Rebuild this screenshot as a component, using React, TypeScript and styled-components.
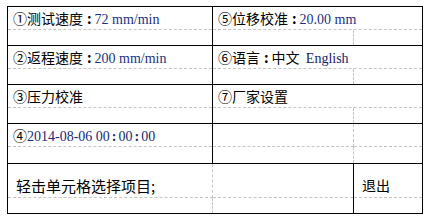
import React from 'react';
import styled, { createGlobalStyle } from 'styled-components';

const GlobalStyle = createGlobalStyle`
  html, body {
    margin: 0;
    background: #fff;
  }
  * { box-sizing: border-box; }
`;

const DASH = '1px dashed #c4c4c4';

const Page = styled.div`
  padding: 6px 0 0 7px;
  font-family: "Noto Sans CJK SC", "Liberation Serif", serif;
  font-size: 14px;
  color: #000;
`;

const Table = styled.div`
  display: grid;
  grid-template-columns: 204px 209px;
  grid-template-rows: 38px 38px 38px 39px 49px;
  gap: 1px;
  width: fit-content;
  background: #000;
  border: 1px solid #000;
`;

const Cell = styled.div<{ $split?: boolean }>`
  display: grid;
  grid-template-columns: ${(p) => (p.$split ? '141px 1fr' : '1fr')};
  grid-template-rows: 23px 1fr;
  background: #fff;
`;

const Label = styled.div`
  grid-column: 1 / -1;
  padding: 1px 0 0 5px;
  border-bottom: ${DASH};
  white-space: nowrap;
  line-height: 21px;
`;

const Part = styled.div<{ $right?: boolean; $bottom?: boolean }>`
  border-right: ${(p) => (p.$right ? DASH : 'none')};
  border-bottom: ${(p) => (p.$bottom ? DASH : 'none')};
`;

const Colon = styled.span<{ $gap?: number }>`
  margin: 0 ${(p) => p.$gap ?? 3}px 0 ${(p) => p.$gap ?? 4}px;
  font-weight: bold;
`;

const Value = styled.span<{ $color?: string }>`
  font-family: "Liberation Serif", serif;
  font-size: 14px;
  color: ${(p) => p.$color || '#1a3286'};
`;

const Footer = styled.div`
  grid-column: 1 / -1;
  display: grid;
  grid-template-columns: 345px 68px;
  gap: 1px;
  background: #000;
`;

const FooterPane = styled.div<{ $cols: string }>`
  display: grid;
  grid-template-columns: ${(p) => p.$cols};
  grid-template-rows: 34px 1fr;
  background: #fff;
`;

const FooterText = styled.div<{ $right?: boolean; $pad: number; $size: number }>`
  padding: 11px 0 0 ${(p) => p.$pad}px;
  border-bottom: ${DASH};
  border-right: ${(p) => (p.$right ? DASH : 'none')};
  white-space: nowrap;
  font-size: ${(p) => p.$size}px;
  line-height: 21px;
`;

export default function App() {
  return (
    <Page>
      <GlobalStyle />
      <Table>
        <Cell>
          <Label>
            ①测试速度<Colon>:</Colon><Value>72 mm/min</Value>
          </Label>
        </Cell>
        <Cell $split>
          <Label>
            ⑤位移校准<Colon>:</Colon><Value>20.00 mm</Value>
          </Label>
          <Part $right />
          <Part />
        </Cell>

        <Cell>
          <Label>
            ②返程速度<Colon>:</Colon><Value>200 mm/min</Value>
          </Label>
        </Cell>
        <Cell $split>
          <Label>
            ⑥语言<Colon>:</Colon>中文&nbsp;&nbsp;<Value $color="#16226a">English</Value>
          </Label>
          <Part $right />
          <Part />
        </Cell>

        <Cell>
          <Label>③压力校准</Label>
        </Cell>
        <Cell $split>
          <Label>⑦厂家设置</Label>
          <Part $right />
          <Part />
        </Cell>

        <Cell>
          <Label>
            ④<Value $color="#172a78">
              2014-08-06 00<Colon $gap={2}>:</Colon>00<Colon $gap={2}>:</Colon>00
            </Value>
          </Label>
        </Cell>
        <Cell $split>
          <Part $right $bottom />
          <Part $bottom />
          <Part $right />
          <Part />
        </Cell>

        <Footer>
          <FooterPane $cols="205px 1fr">
            <FooterText $right $pad={8} $size={15}>轻击单元格选择项目;</FooterText>
            <Part $bottom />
            <Part $right />
            <Part />
          </FooterPane>
          <FooterPane $cols="1fr">
            <FooterText $pad={8} $size={14}>退出</FooterText>
            <Part />
          </FooterPane>
        </Footer>
      </Table>
    </Page>
  );
}
